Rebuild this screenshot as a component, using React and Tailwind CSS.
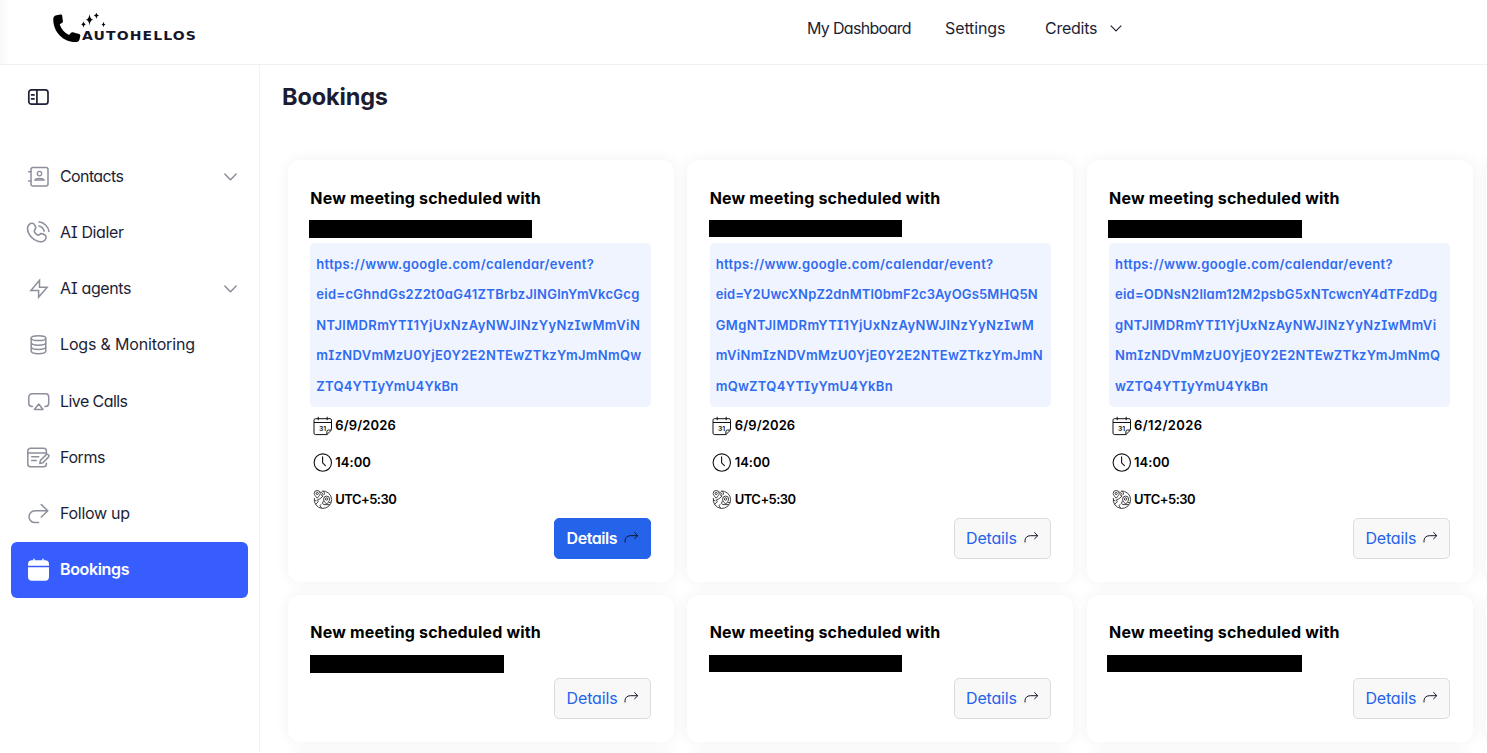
import { useLayoutEffect, useRef, useState } from "react";

// Single line of text whose tracking is computed so that it spans `width` px.
function Fit({ text, width, className = "" }) {
  const ref = useRef(null);
  const [spacing, setSpacing] = useState(0);
  useLayoutEffect(() => {
    const natural = ref.current.getBoundingClientRect().width;
    setSpacing((width - natural) / (text.length - 1));
  }, [text, width]);
  return (
    <span ref={ref} className={`inline-block whitespace-nowrap ${className}`} style={{ letterSpacing: spacing }}>
      {text}
    </span>
  );
}

function Icon({ children, className = "size-6" }) {
  return (
    <svg
      viewBox="0 0 24 24"
      fill="none"
      stroke="currentColor"
      strokeWidth="1.5"
      strokeLinecap="round"
      strokeLinejoin="round"
      className={`shrink-0 overflow-visible ${className}`}
    >
      {children}
    </svg>
  );
}

const icons = {
  contacts: (
    <>
      <rect x="4" y="2.500" width="17" height="18.600" rx="2" />
      <path d="M1.600 6.700H4M1.600 16H4" />
      <circle cx="12.500" cy="8.600" r="2.200" strokeWidth="1.300" />
      <path d="M7.800 15.200c.5-1.400 2-1.700 4.700-1.700s4.200.300 4.700 1.700z" strokeWidth="1.300" />
    </>
  ),
  dialer: (
    <g transform="translate(-4.100 -2.400) scale(1.160)" strokeWidth="1.350">
      <path d="M13.900 2.900s2.800-.2 5.600 2.600 2.900 5.600 2.900 5.600M13.700 6.300s1.400 0 2.900 1.500 1.700 3.100 1.700 3.100" />
      <path d="M10.038 5.316l.649 1.163c.586 1.050.350 2.426-.572 3.349 0 0-1.119 1.119.910 3.148 2.028 2.028 3.147.909 3.147.909.923-.922 2.300-1.157 3.349-.572l1.163.649c1.585.885 1.772 3.107.379 4.500-.837.837-1.862 1.488-2.996 1.531-1.908.073-5.149-.410-8.399-3.661-3.251-3.250-3.734-6.491-3.661-8.399.043-1.133.694-2.159 1.531-2.996 1.393-1.393 3.615-1.206 4.500.379z" />
    </g>
  ),
  agents: <path d="M12.500 3.300v6.900h7.700L11.600 20.300v-6.700H3.900z" strokeLinejoin="miter" />,
  logs: (
    <>
      <ellipse cx="11.500" cy="5.200" rx="7.300" ry="2.400" />
      <path d="M4.200 5.200v12.800c0 1.500 3.200 2.700 7.300 2.700s7.300-1.200 7.300-2.700V5.200M4.200 9.500c0 1.500 3.200 2.700 7.300 2.700s7.300-1.200 7.300-2.700M4.200 13.800c0 1.500 3.200 2.700 7.300 2.700s7.300-1.200 7.300-2.700" />
    </>
  ),
  calls: (
    <>
      <path d="M5.500 16.500H5a3.200 3.200 0 0 1-3.200-3.200V7A3.200 3.200 0 0 1 5 3.800h13.500A3.200 3.200 0 0 1 21.700 7v6.300a3.200 3.200 0 0 1-3.200 3.200H18" />
      <path d="M11.700 14l4.300 5.500H7.400z" />
    </>
  ),
  forms: (
    <>
      <path d="M19.400 8.300V5.100a2.800 2.800 0 0 0-2.800-2.800H3.500A2.700 2.700 0 0 0 .8 5v13a2.700 2.700 0 0 0 2.700 2.700h13.100a2.800 2.800 0 0 0 2.800-2.800v-.7M.8 6.900h18.600M4.700 10.800h7M4.700 14.600h4.600" />
      <path d="M12.800 17.500l.7-3.200 5.800-5.700c1.400-1.200 3.500.7 2.400 2.300l-5.800 5.800z" />
    </>
  ),
  follow: <path d="M14.300 2.600l6.500 6.200-6.500 6.200M20.800 8.800H7.900a5.900 5.900 0 0 0 0 11.800h3.700" />,
  bookings: (
    <g fill="currentColor" stroke="none">
      <path d="M5 2.300h1.300V.7h1.500v1.600h7.400V.7h1.500v1.600H18a4 4 0 0 1 4 4v1.400H1V6.300a4 4 0 0 1 4-4z" />
      <path d="M1 9.200h21v9.600a4 4 0 0 1-4 4H5a4 4 0 0 1-4-4z" />
    </g>
  ),
};

const menu = [
  { icon: "contacts", label: "Contacts", width: 64, expandable: true },
  { icon: "dialer", label: "AI Dialer", width: 64 },
  { icon: "agents", label: "AI agents", width: 71.500, expandable: true },
  { icon: "logs", label: "Logs & Monitoring", width: 135 },
  { icon: "calls", label: "Live Calls", width: 68 },
  { icon: "forms", label: "Forms", width: 45.500 },
  { icon: "follow", label: "Follow up", width: 70 },
  { icon: "bookings", label: "Bookings", width: 69.500, active: true },
];

const bookings = [
  {
    bar: "w-[223px] h-[17.500px] -ml-[1px]",
    date: "6/9/2026",
    dateWidth: 60.500,
    primary: true,
    lines: [
      ["https://www.google.com/calendar/event?", 277.500],
      ["eid=cGhndGs2Z2t0aG41ZTBrbzJlNGlnYmVkcGcg", 323],
      ["NTJlMDRmYTI1YjUxNzAyNWJlNzYyNzIwMmViN", 323.500],
      ["mIzNDVmMzU0YjE0Y2E2NTEwZTkzYmJmNmQw", 325],
      ["ZTQ4YTIyYmU4YkBn", 142],
    ],
  },
  {
    bar: "w-[193px] h-[17px] -ml-[1px]",
    date: "6/9/2026",
    dateWidth: 60.500,
    lines: [
      ["https://www.google.com/calendar/event?", 277.500],
      ["eid=Y2UwcXNpZ2dnMTl0bmF2c3AyOGs5MHQ5N", 322],
      ["GMgNTJlMDRmYTI1YjUxNzAyNWJlNzYyNzIwM", 318],
      ["mViNmIzNDVmMzU0YjE0Y2E2NTEwZTkzYmJmN", 327],
      ["mQwZTQ4YTIyYmU4YkBn", 177],
    ],
  },
  {
    bar: "w-[194px] h-[17.500px] -ml-[1px]",
    date: "6/12/2026",
    dateWidth: 68,
    lines: [
      ["https://www.google.com/calendar/event?", 277.500],
      ["eid=ODNsN2llam12M2psbG5xNTcwcnY4dTFzdDg", 322],
      ["gNTJlMDRmYTI1YjUxNzAyNWJlNzYyNzIwMmVi", 321],
      ["NmIzNDVmMzU0YjE0Y2E2NTEwZTkzYmJmNmQ", 325],
      ["wZTQ4YTIyYmU4YkBn", 153],
    ],
  },
  null,
  { bar: "w-[194px] h-[17.500px]" },
  { bar: "w-[193px] h-[17px] -ml-[1px]" },
  { bar: "w-[195px] h-[17px] -ml-[2px]" },
  null,
  null,
  null,
  null,
  null,
];

function Chevron({ className }) {
  return (
    <svg viewBox="0 0 13 8" fill="none" stroke="currentColor" strokeWidth="1.300" strokeLinecap="round" strokeLinejoin="round" className={className}>
      <path d="M.8 1l5.700 5.800L12.200 1" />
    </svg>
  );
}

function Logo() {
  return (
    <div className="flex h-[31px] w-[146px] items-end">
      <svg viewBox="0 0 54 31" className="h-[31px] w-[54px] shrink-0" fill="#000">
        <path d="M3.500 2.200L7.500 1.600c1-.1 1.600.3 1.700 1.300l.7 5.200c.1.900-.1 1.500-1 1.900L6.700 11.300c1.300 4.700 4.600 8.400 9.300 10.700l2-2.200c.5-.6 1.100-.7 1.800-.5l6.200 1.600c1 .3 1.500.9 1.300 1.900l-.8 3.700c-.4 1.600-1.400 2.400-3 2.500C10.500 29.800.600 19 .300 7.500.200 4.500.600 2.800 3.500 2.200z" />
        <path d="M36.500.8q.4 5.400 3.700 6-3.300.6-3.700 6-.4-5.400-3.700-6 3.300-.6 3.700-6zM43.400-.8q.3 3 2.600 3.300-2.300.3-2.600 3.300-.3-3-2.600-3.300 2.300-.3 2.600-3.300zM30.500 8.300q.3 2.800 2.200 3.100-1.900.3-2.200 3.100-.3-2.800-2.200-3.100 1.900-.3 2.200-3.100zM50.500 8.800q.3 2.400 2 2.700-1.700.3-2 2.700-.3-2.400-2-2.700 1.700-.3 2-2.700z" />
      </svg>
      <div className="-ml-[25px] origin-left scale-x-[1.120] pb-[1px] font-['DejaVu_Sans'] text-[12.500px] leading-[14px] font-bold tracking-[1px] text-[#14152a]">
        AUTOHELLOS
      </div>
    </div>
  );
}

function Header() {
  return (
    <header className="flex h-[65px] shrink-0 items-start border-b border-[#f0f0f2] bg-white">
      <div className="h-[64px] w-[9px] shrink-0 bg-linear-to-r from-[#f8f8f9] to-white" />
      <div className="pt-[13px] pl-[44px]">
        <Logo />
      </div>
      <nav className="ml-[608px] flex h-[57px] items-center text-[16px] text-[#1d1e35]">
        <div className="w-[138px] pb-[2px]">
          <Fit text="My Dashboard" width={104.500} />
        </div>
        <div className="w-[100px] pb-[2px]">
          <Fit text="Settings" width={60.500} />
        </div>
        <div className="w-[65px] pb-[2px]">
          <Fit text="Credits" width={52.500} />
        </div>
        <Chevron className="h-[7px] w-[12px]" />
      </nav>
    </header>
  );
}

function Sidebar() {
  return (
    <aside className="flex w-[260px] shrink-0 flex-col border-r border-[#f3f3f5] bg-white">
      <div className="h-[84px] pt-[23px] pl-[27px]">
        <svg viewBox="0 0 22 18" className="h-[18px] w-[22px]" fill="none" stroke="#1d2135" strokeWidth="1.700" strokeLinecap="round">
          <rect x="1.800" y="1.900" width="19.200" height="14.200" rx="2.700" />
          <path d="M9.900 2v14M4.600 6.900H7M4.600 10.900H7" />
        </svg>
      </div>
      <ul className="pr-[11px] pl-[11px]">
        {menu.map((item) => (
          <li
            key={item.label}
            className={`flex h-[56.140px] items-center gap-[9px] rounded-[6px] pr-[11px] pl-[16px] text-[16px] ${
              item.active ? "bg-[#385dff] font-semibold text-white" : "text-[#1d1e35]"
            }`}
          >
            <span className={item.active ? "text-white" : "text-[#8d8f9b]"}>
              <Icon>{icons[item.icon]}</Icon>
            </span>
            <span className="pb-[2px]">
              <Fit text={item.label} width={item.width} />
            </span>
            {item.expandable && <Chevron className="mb-[1px] ml-auto h-[8px] w-[13px] text-[#858793]" />}
          </li>
        ))}
      </ul>
    </aside>
  );
}

function CalendarIcon() {
  return (
    <svg viewBox="0 0 20 20" className="size-5" fill="none" stroke="#111" strokeWidth="1">
      <path d="M18.500 13.500V4.200a1.500 1.500 0 0 0-1.500-1.500H2.500A1.500 1.500 0 0 0 1 4.200v12.900a1.500 1.500 0 0 0 1.500 1.500h11.400l4.600-4.600h-3a1.600 1.600 0 0 0-1.600 1.600v3M1 6.500h17.500M5.200.8v3.400M14.200.8v3.400" />
      <text x="6" y="15.200" fontSize="6.800" fontWeight="600" fill="#111" stroke="none">
        31
      </text>
    </svg>
  );
}

function ClockIcon() {
  return (
    <svg viewBox="0 0 20 20" className="size-5" fill="none" stroke="#111" strokeWidth="1.100" strokeLinecap="round">
      <circle cx="9.800" cy="9.600" r="8.700" />
      <path d="M9.600 3.800v6l2.800 2.900" />
    </svg>
  );
}

function GlobeIcon() {
  return (
    <svg viewBox="0 0 20 20" className="size-5" fill="none" stroke="#222" strokeWidth=".85" strokeLinejoin="round">
      <path d="M8.800 1.100A8.700 8.700 0 1 1 1.400 8" />
      <path d="M4.200 8.200C2.300 6 1.200 4.700 1.200 3.500a3 3 0 0 1 6 0c0 1.200-1.100 2.500-3 4.700z" />
      <circle cx="4.200" cy="3.500" r="1.100" />
      <path d="M13.600 14.100c-2-2.300-3-3.500-3-5a3 3 0 0 1 6 0c0 1.500-1 2.700-3 5z" />
      <circle cx="13.600" cy="9" r="1.200" />
      <path d="M7.200 2l2.300 1.300-.9 2 1.500.8-3.300 2.800-2.300.9.700 1.900-2.600 2.600M1.500 10.500l2 .3M10.600 10.700l-1.300 2.600 1.700 1.300h5.700M8.600 18l-1.600-2.300 1.200-1.500M9.800 1.100l1.800 1.800-.8 2.200M17.800 12.300l-2.200.4" />
    </svg>
  );
}

function Meta({ icon, text, width }) {
  return (
    <div className="flex h-[37px] items-center gap-[2.500px] pl-[2.500px] text-[13px] font-semibold text-black">
      {icon}
      <Fit text={text} width={width} />
    </div>
  );
}

function DetailsButton({ primary }) {
  return (
    <button
      className={`flex h-[41px] w-[97px] items-center gap-[7px] self-end rounded-[5px] border pl-[11.500px] text-[16px] ${
        primary ? "border-[#2563eb] bg-[#2563eb] font-semibold text-white" : "border-[#dcdcdc] bg-[#f8f8f8] text-[#2563eb]"
      }`}
    >
      <span className="pb-[2px]">
        <Fit text="Details" width={51} />
      </span>
      <svg viewBox="0 0 15 14" className="-mt-[2px] h-[14px] w-[15px]" fill="none" stroke="#111827" strokeWidth="1" strokeLinecap="round" strokeLinejoin="round">
        <path d="M1 11V9.700C1 6.700 3.300 4.700 6.300 4.700H13.500M10.600 1.500l3.200 3.200-3.200 3.100" />
      </svg>
    </button>
  );
}

function BookingCard({ booking }) {
  return (
    <article className="flex flex-col rounded-[12px] bg-white py-[23px] pr-[22.900px] pl-[22.300px] shadow-[0_0_15px_rgba(0,0,0,0.060)]">
      {booking && (
        <>
          <h4 className={`h-[37px] text-[16px] font-bold text-black ${booking.lines ? "leading-[31px]" : "leading-[29px]"}`}>
            <Fit text="New meeting scheduled with" width={230.500} />
          </h4>
          <div className="h-[23px]">
            <div className={`bg-black ${booking.bar}`} />
          </div>
          {booking.lines && (
            <>
              <a className="block h-[164px] w-[341px] rounded-[5px] bg-[#eff4ff] pt-[6px] pl-[6px] text-[13px] font-semibold text-[#2f6bf0]">
                {booking.lines.map(([text, width]) => (
                  <span key={text} className="block h-[30.400px] leading-[30.400px]">
                    <Fit text={text} width={width} />
                  </span>
                ))}
              </a>
              <Meta icon={<CalendarIcon />} text={booking.date} width={booking.dateWidth} />
              <Meta icon={<ClockIcon />} text="14:00" width={35.500} />
              <Meta icon={<GlobeIcon />} text="UTC+5:30" width={61.500} />
            </>
          )}
          <DetailsButton primary={booking.primary} />
        </>
      )}
    </article>
  );
}

export default function App() {
  return (
    <div className="flex h-[753px] w-full flex-col overflow-hidden bg-white font-[Inter,sans-serif] [font-feature-settings:'cv11','cv08']">
      <Header />
      <div className="flex min-h-0 flex-1">
        <Sidebar />
        <main className="min-w-0 flex-1 overflow-hidden pt-[16px] pl-[22px]">
          <h1 className="h-[79px] text-[23.500px] leading-[32px] font-bold text-[#1b1c33]">
            <Fit text="Bookings" width={106} />
          </h1>
          <div className="ml-[6px] grid w-max grid-cols-[repeat(4,386px)] grid-rows-[422px_147px_147px] gap-x-[13.400px] gap-y-[13px]">
            {bookings.map((booking, index) => (
              <BookingCard key={index} booking={booking} />
            ))}
          </div>
        </main>
      </div>
    </div>
  );
}
